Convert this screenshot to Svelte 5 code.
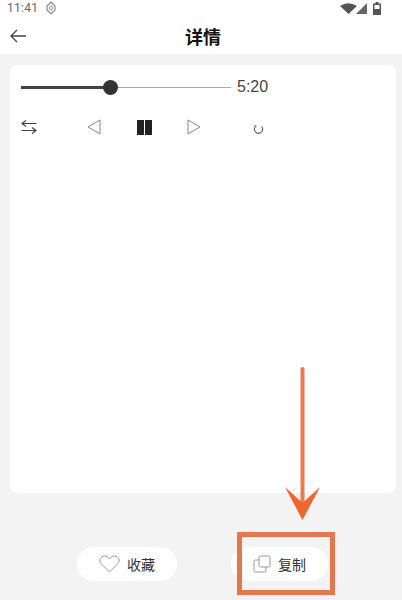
<script>
	const title = '详情';
</script>

<div class="page">
	<div class="status">
		<span class="clock">11:41</span>
		<svg class="shield" width="10" height="14" viewBox="0 0 10 14">
			<path d="M5 1 9 5v4l-4 4-4-4V5z" fill="none" stroke="#888" stroke-width="1.200" />
			<path d="M5 4.500 7 7 5 9.500 3 7z" fill="none" stroke="#888" stroke-width="1" />
		</svg>
		<span class="spacer"></span>
		<svg class="wifi" width="17" height="11" viewBox="0 0 17 11"><path d="M0 3Q8.500-2.500 17 3L8.500 11z" fill="#555" /></svg>
		<svg width="11" height="11" viewBox="0 0 11 11"><path d="M11 0v11H0z" fill="#666" /></svg>
		<svg class="battery" width="8" height="13" viewBox="0 0 8 13">
			<path d="M2.500 0h3v1.500H8V13H0V1.500h2.500z" fill="#555" />
			<rect x="1.500" y="3" width="5" height="4" fill="#fff" />
		</svg>
	</div>

	<header>
		<svg class="back" width="16" height="14" viewBox="0 0 16 14">
			<path d="M16 7H1M7 1 1 7l6 6" fill="none" stroke="#444" stroke-width="1.300" />
		</svg>
		<h1>{title}</h1>
	</header>

	<main>
		<section class="card">
			<div class="progress">
				<div class="track">
					<div class="fill"></div>
					<div class="thumb"></div>
				</div>
				<span class="time">5:20</span>
			</div>
			<div class="controls">
				<svg class="loop" width="16" height="16" viewBox="0 0 16 16">
					<path d="M15.500 4.500H1M5 1.500 1 4.500 5 7.500M.500 11.500H15M11 8.500l4 3-4 3" fill="none" stroke="#444" stroke-width="1.200" />
				</svg>
				<svg class="prev" width="14" height="16" viewBox="0 0 14 16">
					<path d="M13 1v14L1 8z" fill="none" stroke="#888" stroke-width="1" />
				</svg>
				<div class="pause"><i></i><i></i></div>
				<svg class="next" width="14" height="16" viewBox="0 0 14 16">
					<path d="M1 1v14l12-7z" fill="none" stroke="#888" stroke-width="1" />
				</svg>
				<svg class="repeat" width="11" height="11" viewBox="0 0 11 11">
					<path d="M2.500 2.500A4 4 0 1 0 8.500 2.500" fill="none" stroke="#666" stroke-width="1.100" />
					<path d="M1 1.200 3.400 1.200 3.400 3.600z" fill="#666" />
				</svg>
			</div>
		</section>
		<div class="actions">
			<button>
				<svg width="21" height="18" viewBox="0 0 21 18">
					<path d="M10.500 17 2 8.500C-.500 5.500 1.500 1 5.500 1c2.300 0 4 1.200 5 3 1-1.800 2.700-3 5-3 4 0 6 4.500 3.500 7.500z" fill="none" stroke="#999" stroke-width="1" />
				</svg>
				收藏
			</button>
			<button class="copy">
				<svg width="18" height="18" viewBox="0 0 18 18">
					<rect x="6" y="1" width="11" height="11" rx="1.500" fill="none" stroke="#999" stroke-width="1" />
					<path d="M6 5H2.500A1.500 1.500 0 0 0 1 6.500v9A1.500 1.500 0 0 0 2.500 17h9a1.500 1.500 0 0 0 1.500-1.500V12" fill="none" stroke="#999" stroke-width="1" />
				</svg>
				复制
			</button>
		</div>
	</main>

	<!-- annotation over the screenshot -->
	<div class="callout"></div>
	<svg class="arrow" width="40" height="160" viewBox="0 0 40 160">
		<path d="M20.500 3V140" stroke="#ec7a50" stroke-width="4" stroke-linecap="round" />
		<path d="M3 121 20.500 154 38 121 20.500 137z" fill="#f1652f" />
	</svg>
</div>

<style>
	:global(body) {
		margin: 0;
		background: #f3f3f3;
	}

	.page {
		position: relative;
		width: 402px;
		height: 600px;
		overflow: hidden;
		background: #f3f3f3;
		font-family: "Liberation Sans", "Noto Sans CJK SC", sans-serif;
	}

	.status {
		display: flex;
		align-items: center;
		gap: 3px;
		height: 16px;
		padding: 0 21px 0 7px;
		background: #fff;
	}

	.clock {
		font-family: Roboto, sans-serif;
		font-size: 12px;
		letter-spacing: 0.3px;
		color: #666;
	}

	.shield {
		margin-left: 5px;
	}

	.spacer {
		flex: 1;
	}

	.wifi {
		margin-right: -4px;
	}

	.battery {
		margin-left: 3px;
	}

	header {
		position: relative;
		display: flex;
		align-items: center;
		justify-content: center;
		height: 38px;
		background: #fff;
	}

	.back {
		position: absolute;
		left: 10px;
		top: 13px;
	}

	h1 {
		margin: 1px 0 0;
		padding-left: 4px;
		font-size: 18px;
		font-weight: 700;
		color: #111;
	}

	main {
		display: flex;
		flex-direction: column;
		padding: 11px 6px 0 10px;
	}

	.card {
		height: 428px;
		box-sizing: border-box;
		padding: 14px 11px 0;
		border-radius: 8px;
		background: #fff;
	}

	.progress {
		display: flex;
		align-items: center;
		gap: 6px;
		height: 16px;
	}

	.track {
		position: relative;
		width: 210px;
		height: 1px;
		background: #aaa;
	}

	.fill {
		position: absolute;
		left: 0;
		top: -1px;
		width: 85px;
		height: 3px;
		background: #444;
	}

	.thumb {
		position: absolute;
		left: 82px;
		top: -7px;
		width: 15px;
		height: 15px;
		border-radius: 50%;
		background: #333;
	}

	.time {
		font-size: 16px;
		color: #444;
	}

	.controls {
		display: flex;
		align-items: center;
		height: 20px;
		margin-top: 22px;
	}

	.prev {
		margin-left: 50px;
	}

	.pause {
		display: flex;
		gap: 1px;
		margin-left: 36px;
		margin-top: 1px;
	}

	.pause i {
		width: 7px;
		height: 15px;
		background: #222;
	}

	.next {
		margin-left: 35px;
	}

	.repeat {
		margin-left: 52px;
		margin-top: 5px;
	}

	.actions {
		display: flex;
		gap: 54px;
		margin-top: 54px;
		padding-left: 67px;
	}

	button {
		display: flex;
		align-items: center;
		justify-content: center;
		gap: 7px;
		width: 100px;
		height: 34px;
		padding: 0;
		border: none;
		border-radius: 17px;
		background: #fff;
		font-family: inherit;
		font-size: 14px;
		color: #333;
	}

	button.copy {
		width: 97px;
	}

	.callout {
		position: absolute;
		left: 237px;
		top: 532px;
		width: 98px;
		height: 63px;
		box-sizing: border-box;
		border: 5px solid #e5774e;
	}

	.arrow {
		position: absolute;
		left: 282px;
		top: 366px;
	}
</style>
